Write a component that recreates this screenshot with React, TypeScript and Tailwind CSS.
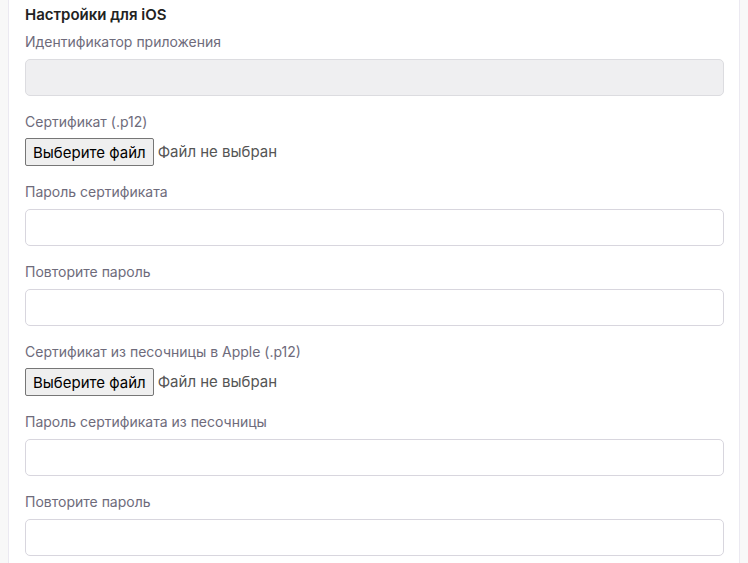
const labelCls = 'block text-[14px] leading-5 text-[#6e6b7b] mb-[7px]'
const inputCls = 'block w-full h-[37px] rounded-[5px] border px-3 text-[14px] text-[#6e6b7b] focus:outline-none'

function FileField({ label }: { label: string }) {
  return (
    <div className="mb-4">
      <label className="block text-[14px] leading-5 text-[#6e6b7b] mb-[6px]">{label}</label>
      <div className="flex items-center">
        <button
          type="button"
          className="h-[28px] px-[7px] rounded-[2px] border border-[#767676] bg-[#efefef] text-[15px] text-black leading-none"
        >
          Выберите файл
        </button>
        <span className="ml-[4px] text-[15px] text-[#555]">Файл не выбран</span>
      </div>
    </div>
  )
}

function TextField({ label, disabled }: { label: string; disabled?: boolean }) {
  return (
    <div className="mb-4">
      <label className={labelCls}>{label}</label>
      <input
        type="password"
        disabled={disabled}
        className={
          inputCls +
          (disabled ? ' bg-[#efeff1] border-[#dcdce0]' : ' bg-white border-[#d8d6de]')
        }
      />
    </div>
  )
}

export default function App() {
  return (
    <div className="min-h-screen w-[748px] bg-[#f8f8f8] pl-2 pr-2 font-['Inter','Noto_Sans',sans-serif]">
      <div className="min-h-screen bg-white border-x border-[#ebe9f1] pl-4 pr-[15px] pt-1">
        <h4 className="text-[15px] leading-[22px] font-semibold text-[#222] mb-[6px]">Настройки для iOS</h4>

        <TextField label="Идентификатор приложения" disabled />
        <FileField label="Сертификат (.p12)" />
        <TextField label="Пароль сертификата" />
        <TextField label="Повторите пароль" />
        <FileField label="Сертификат из песочницы в Apple (.p12)" />
        <TextField label="Пароль сертификата из песочницы" />
        <TextField label="Повторите пароль" />
      </div>
    </div>
  )
}
